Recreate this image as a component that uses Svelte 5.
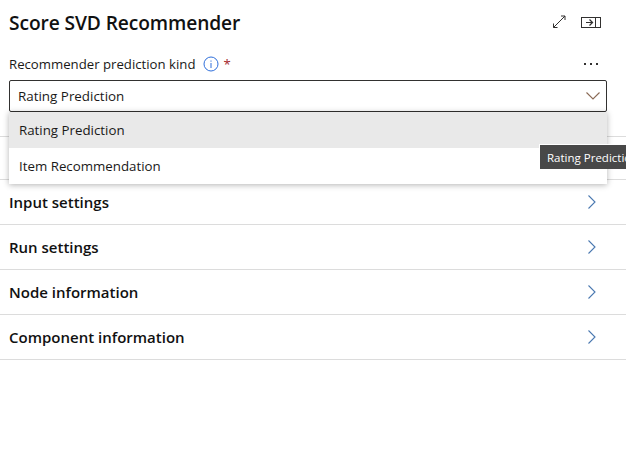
<script>
	const sections = ['Input settings', 'Run settings', 'Node information', 'Component information'];
	const options = ['Rating Prediction', 'Item Recommendation'];
</script>

<div class="panel">
	<header class="head">
		<h1>Score SVD Recommender</h1>
		<div class="head-icons">
			<svg width="14" height="14" viewBox="0 0 14 14" fill="none" stroke="#323130" stroke-width="1">
				<path d="M1.500 12.500 13 1M9 1H13V5M1.500 8.500V12.500H5.500" />
			</svg>
			<svg width="20" height="11" viewBox="0 0 20 11" fill="none" stroke="#323130" stroke-width="1">
				<rect x="0.500" y="0.500" width="19" height="10" />
				<path d="M14.500 0.500v10M5 5.500h7" />
				<path d="M8.500 2.500l3 3-3 3" stroke-width="1.300" />
			</svg>
		</div>
	</header>

	<div class="field">
		<div class="label-row">
			<span class="label">Recommender prediction kind</span>
			<svg class="info" width="16" height="16" viewBox="0 0 16 16" fill="none" stroke="#2f6fdb">
				<circle cx="8" cy="8" r="7" />
				<path d="M8 7v5M8 4.500v1.200" />
			</svg>
			<span class="req">*</span>
			<span class="more">
				<i></i><i></i><i></i>
			</span>
		</div>
		<div class="select-wrap">
			<div class="select">
				<span>Rating Prediction</span>
				<svg width="14" height="8" viewBox="0 0 14 8" fill="none" stroke="#8a6a55" stroke-width="1.100">
					<path d="M0.500 0.500 7 7l6.500-6.500" />
				</svg>
			</div>
			<ul class="menu">
				{#each options as opt, i}
					<li class:active={i === 0}>{opt}</li>
				{/each}
			</ul>
		</div>
	</div>

	<div class="sections">
		<div class="row blank"></div>
		{#each sections as s}
			<div class="row">
				<span>{s}</span>
				<svg width="8" height="14" viewBox="0 0 8 14" fill="none" stroke="#4a78b0" stroke-width="1.100">
					<path d="M0.500 0.500 7 7l-6.500 6.500" />
				</svg>
			</div>
		{/each}
	</div>

	<div class="tooltip">Rating Prediction</div>
</div>

<style>
	:global(body) {
		margin: 0;
		background: #fff;
	}

	.panel {
		position: relative;
		width: 626px;
		height: 459px;
		overflow: hidden;
		font-family: 'Open Sans', 'Noto Sans', sans-serif;
		color: #1a1918;
	}

	.head {
		display: flex;
		align-items: center;
		justify-content: space-between;
		height: 48px;
		padding: 0 25px 0 9px;
	}

	h1 {
		margin: -4px 0 0;
		font-size: 19.200px;
		font-weight: 600;
		letter-spacing: -0.1px;
		color: #111;
	}

	.head-icons {
		display: flex;
		align-items: center;
		gap: 15px;
		margin-top: -4px;
	}

	.field {
		padding: 0 19px 0 9px;
	}

	.label-row {
		display: flex;
		align-items: center;
		height: 32px;
		font-size: 13.200px;
	}

	.info {
		margin-left: 8px;
	}

	.req {
		margin-left: 4px;
		color: #a4262c;
	}

	.more {
		display: flex;
		gap: 4px;
		margin-left: auto;
		margin-right: 9px;
	}

	.more i {
		width: 2px;
		height: 2px;
		background: #323130;
	}

	.select-wrap {
		position: relative;
	}

	.select {
		display: flex;
		align-items: center;
		justify-content: space-between;
		box-sizing: border-box;
		height: 32px;
		padding: 0 6px 0 8px;
		border: 1px solid #323130;
		border-radius: 2px;
		font-size: 13.400px;
	}

	.menu {
		position: absolute;
		top: 32px;
		left: 0;
		right: 0;
		z-index: 2;
		margin: 0;
		padding: 0;
		list-style: none;
		background: #fff;
		box-shadow: 0 1px 6px rgba(0, 0, 0, 0.3);
		font-size: 13.300px;
	}

	.menu li {
		display: flex;
		align-items: center;
		height: 36px;
		padding-left: 10px;
	}

	.menu li.active {
		background: #e9e9e9;
	}

	.sections {
		margin-top: 24px;
		border-top: 1px solid #dcdcdc;
	}

	.row {
		display: flex;
		align-items: center;
		justify-content: space-between;
		box-sizing: border-box;
		height: 45px;
		padding: 0 30px 0 9px;
		border-bottom: 1px solid #dcdcdc;
		font-size: 15px;
		font-weight: 600;
		color: #111;
	}

	.row.blank {
		height: 43px;
	}

	.tooltip {
		position: absolute;
		top: 144px;
		left: 539px;
		z-index: 3;
		box-sizing: border-box;
		width: 90px;
		height: 25px;
		padding-left: 7px;
		background: #484848;
		border: solid #fff;
		border-width: 1px 0 0 1px;
		color: #fff;
		font-size: 11.500px;
		line-height: 25px;
		white-space: nowrap;
	}
</style>
